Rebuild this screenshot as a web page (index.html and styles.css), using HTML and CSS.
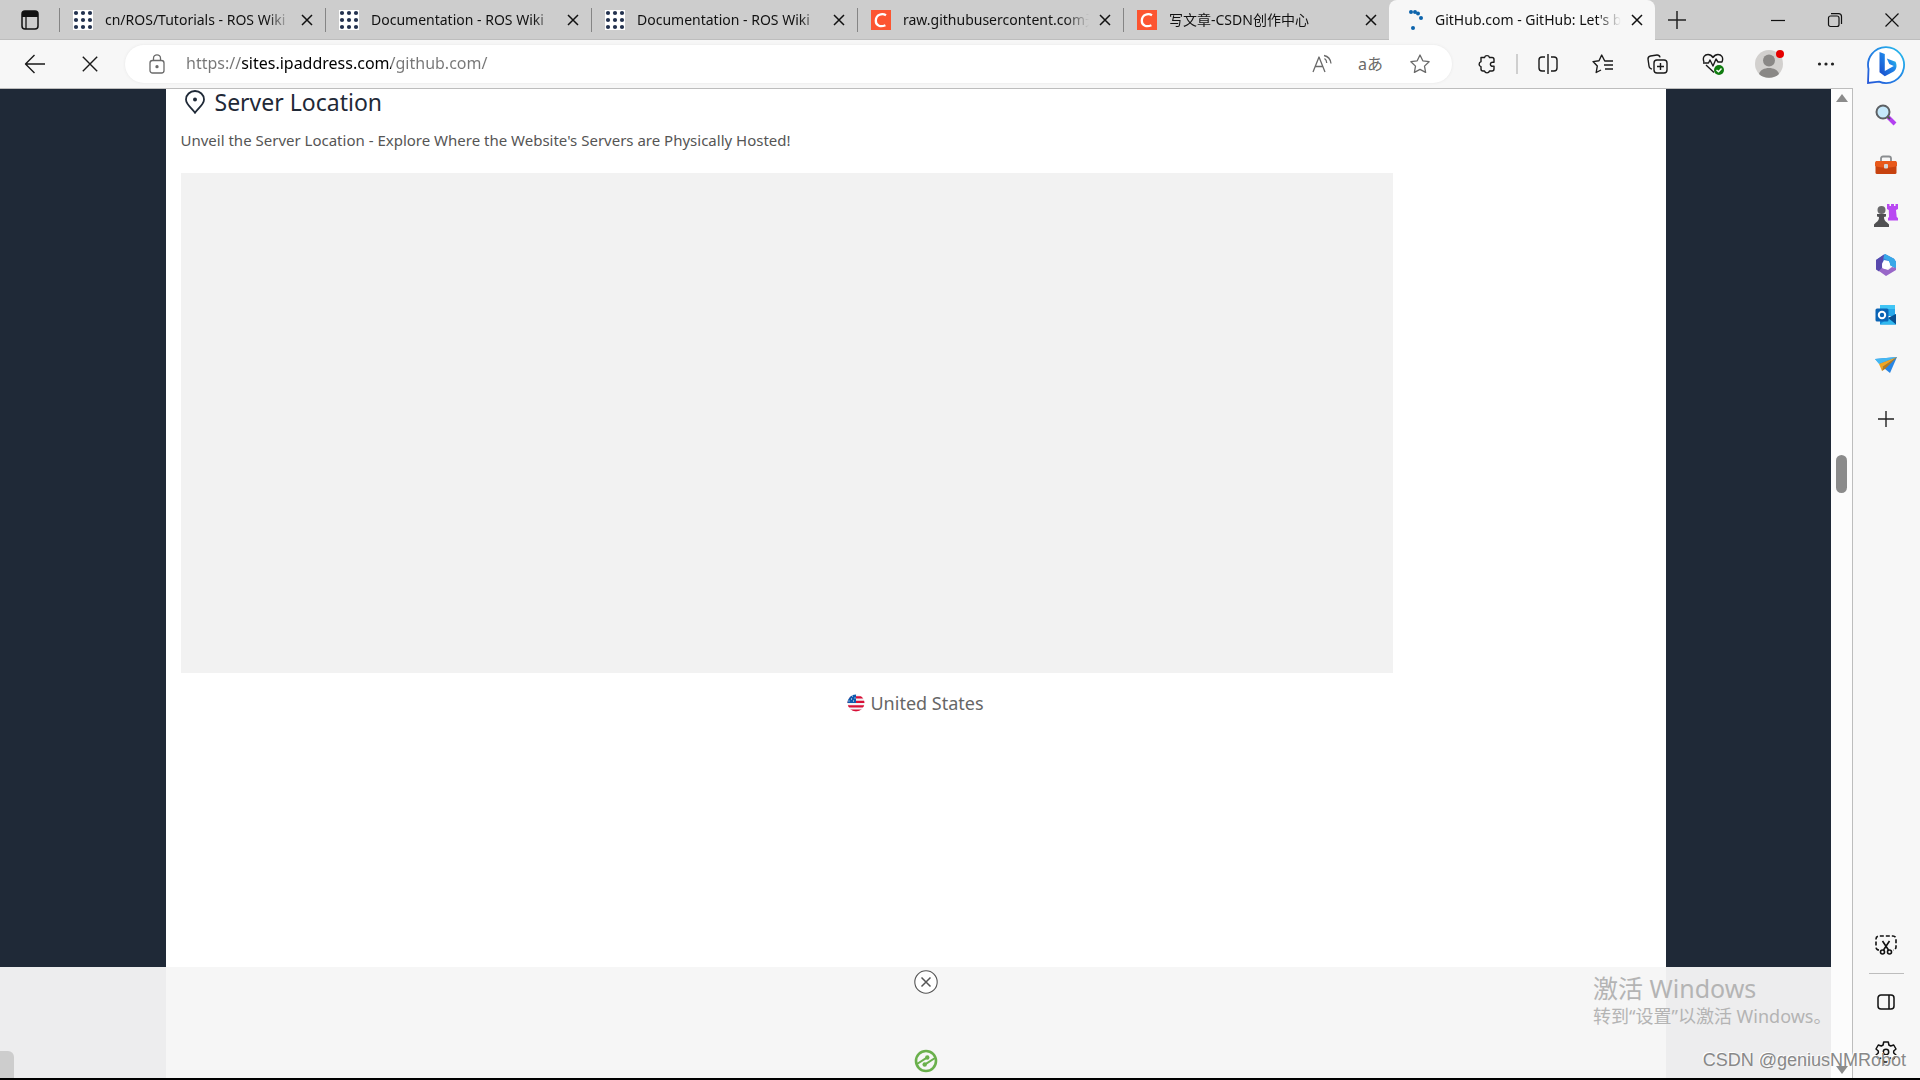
FILE: index.html
```html
<!DOCTYPE html>
<html lang="en">
<head>
<meta charset="utf-8">
<title>GitHub.com - GitHub: Let's build from here</title>
<link rel="stylesheet" href="styles.css">
</head>
<body>
<svg class="defs" aria-hidden="true">
  <symbol id="close" viewBox="0 0 12 12"><path d="M1 1l10 10M11 1L1 11"/></symbol>
  <symbol id="ros" viewBox="0 0 20 20">
    <rect width="20" height="20" fill="#fff"/>
    <g fill="#22314e"><circle cx="3" cy="3" r="2.1"/><circle cx="10" cy="3" r="2.1"/><circle cx="17" cy="3" r="2.1"/><circle cx="3" cy="10" r="2.1"/><circle cx="10" cy="10" r="2.1"/><circle cx="17" cy="10" r="2.1"/><circle cx="3" cy="17" r="2.1"/><circle cx="10" cy="17" r="2.1"/><circle cx="17" cy="17" r="2.1"/></g>
  </symbol>
  <symbol id="csdn" viewBox="0 0 20 20">
    <rect width="20" height="20" fill="#fc5531"/>
    <path d="M15 5.2C11 2.8 5 4.5 4.8 10.6c-.1 5.600 5.200 6.600 9.600 4.600" fill="none" stroke="#fff" stroke-width="2.300"/>
  </symbol>
</svg>

<header class="tabbar">
  <button class="tab-menu" aria-label="Tab actions menu">
    <svg width="18" height="20" viewBox="0 0 18 20"><rect x="1" y="1" width="16" height="18" rx="3" fill="none" stroke="#111" stroke-width="1.500"/><path d="M1 7V4a3 3 0 0 1 3-3h10a3 3 0 0 1 3 3v3z" fill="#111"/><path d="M5 7v12" stroke="#111" stroke-width="1.300"/></svg>
  </button>
  <nav class="tabs">
    <div class="tab"><svg class="favicon"><use href="#ros"/></svg><a class="tab-title" href="#">cn/ROS/Tutorials - ROS Wiki</a><button class="tab-close" aria-label="Close tab"><svg><use href="#close"/></svg></button></div>
    <div class="tab"><svg class="favicon"><use href="#ros"/></svg><a class="tab-title" href="#">Documentation - ROS Wiki</a><button class="tab-close" aria-label="Close tab"><svg><use href="#close"/></svg></button></div>
    <div class="tab"><svg class="favicon"><use href="#ros"/></svg><a class="tab-title" href="#">Documentation - ROS Wiki</a><button class="tab-close" aria-label="Close tab"><svg><use href="#close"/></svg></button></div>
    <div class="tab"><svg class="favicon"><use href="#csdn"/></svg><a class="tab-title" href="#">raw.githubusercontent.com无法</a><button class="tab-close" aria-label="Close tab"><svg><use href="#close"/></svg></button></div>
    <div class="tab"><svg class="favicon"><use href="#csdn"/></svg><a class="tab-title" href="#">写文章-CSDN创作中心</a><button class="tab-close" aria-label="Close tab"><svg><use href="#close"/></svg></button></div>
    <div class="tab tab-active"><svg class="favicon" viewBox="0 0 20 20"><g fill="#0c64ac"><circle cx="8" cy="2" r="2"/><circle cx="12" cy="2" r="2"/><circle cx="15" cy="3.500" r="2"/><circle cx="18" cy="8" r="2"/><circle cx="10" cy="18" r="2"/></g></svg><a class="tab-title" href="#">GitHub.com - GitHub: Let's build from here</a><button class="tab-close" aria-label="Close tab"><svg><use href="#close"/></svg></button></div>
  </nav>
  <button class="new-tab" aria-label="New tab"><svg width="18" height="18" viewBox="0 0 18 18"><path d="M9 0v18M0 9h18" stroke="#222" stroke-width="1.500"/></svg></button>
  <div class="window-buttons">
    <button aria-label="Minimize"><svg width="14" height="14" viewBox="0 0 14 14"><path d="M0 7.500h14"/></svg></button>
    <button aria-label="Restore"><svg width="14" height="14" viewBox="0 0 14 14"><rect x=".5" y="3" width="10.500" height="10.500" rx="2"/><path d="M3 .6h7.500a3 3 0 0 1 3 3V11"/></svg></button>
    <button aria-label="Close"><svg width="14" height="14" viewBox="0 0 14 14"><path d="M.5.5l13 13M13.500.5l-13 13"/></svg></button>
  </div>
</header>

<div class="window">
  <div class="browser">
    <div class="toolbar">
      <button class="nav-button" aria-label="Back"><svg width="22" height="20" viewBox="0 0 22 20"><path d="M21 10H1.500M10.500 1L1.500 10l9 9"/></svg></button>
      <button class="nav-button" aria-label="Stop"><svg width="16" height="16" viewBox="0 0 16 16"><path d="M.8.8l14.400 14.400M15.200.8L.8 15.200"/></svg></button>
      <form class="address">
        <svg class="lock" width="16" height="20" viewBox="0 0 16 20"><rect x="1" y="6.500" width="14" height="12.500" rx="2.500"/><path d="M4.500 6.500V4.300a3.500 3.500 0 0 1 7 0v2.200"/><circle cx="8" cy="12.700" r="1" fill="#666"/></svg>
        <input class="url" type="text" aria-label="Address" value="https://sites.ipaddress.com/github.com/">
        <button type="button" aria-label="Read aloud"><svg width="20" height="20" viewBox="0 0 20 20"><path d="M1 18L7 3l6 15M3.200 12.500h7.600M12.500 4.500a5 5 0 0 1 2.200 4.500M12 1.500c4 .8 6.500 3.500 7 8"/></svg></button>
        <button type="button" class="translate" aria-label="Translate">aあ</button>
        <button type="button" aria-label="Add to favorites"><svg width="20" height="20" viewBox="0 0 20 20"><path d="M10 1l2.800 5.800 6.300.9-4.600 4.400 1.100 6.300-5.600-3-5.600 3 1.100-6.300L.9 7.700l6.300-.9z"/></svg></button>
      </form>
      <button class="tool" aria-label="Extensions"><svg width="20" height="20" viewBox="0 0 20 20"><path d="M4 3.500h3.500a2.600 2.600 0 0 1 5 0H15a2 2 0 0 1 2 2v2.800h-1a2 2 0 1 0 0 3.800h1V15a2 2 0 0 1-2 2h-2.500a2.600 2.600 0 0 1-5 0H6a2 2 0 0 1-2-2v-2.300a2.600 2.600 0 0 1 0-5z"/></svg></button>
      <span class="divider"></span>
      <button class="tool" aria-label="Split screen"><svg width="20" height="20" viewBox="0 0 20 20"><path d="M7 17H4a3 3 0 0 1-3-3V6a3 3 0 0 1 3-3h3M10 0v20M13 3h3a3 3 0 0 1 3 3v8a3 3 0 0 1-3 3h-3"/></svg></button>
      <button class="tool" aria-label="Favorites"><svg width="22" height="20" viewBox="0 0 22 20"><path d="M13 7.500L9.700 1 7 6.800l-6 .8 4.300 4.400L4.200 18.500 9 16M13 7h8M12 11h9M13 15h8"/></svg></button>
      <button class="tool" aria-label="Collections"><svg width="22" height="20" viewBox="0 0 22 20"><path d="M5 15l-1.200-.4A3 3 0 0 1 2 12L1 5a3 3 0 0 1 2.500-3L10 1a3 3 0 0 1 3 2.300"/><rect x="7" y="6" width="13" height="13" rx="3"/><path d="M13.500 9v7M10 12.500h7"/></svg></button>
      <button class="tool" aria-label="Browser essentials"><svg width="22" height="22" viewBox="0 0 22 22"><path d="M2 9C0 4 3 1.500 6 1.500c2.300 0 4 1.500 5 3 1-1.500 2.700-3 5-3 3 0 6 2.500 4 7.500h-4l-2-3-3 7-3-6-1.500 3H1M4 12l8 7.500"/><circle cx="17" cy="17" r="5" fill="#107c10" stroke="none"/><path d="M14.500 17l2 1.800 3-3.300" stroke="#fff"/></svg></button>
      <button class="tool profile" aria-label="Profile"><span class="avatar"><svg width="28" height="28" viewBox="0 0 28 28"><circle cx="14" cy="14" r="14" fill="#d2d0ce"/><circle cx="14" cy="10.500" r="6" fill="#8a8886"/><path d="M4 24c2-8 18-8 20 0-5 5-15 5-20 0z" fill="#8a8886"/></svg></span></button>
      <button class="tool" aria-label="Settings and more"><svg width="18" height="4" viewBox="0 0 18 4"><g fill="#222" stroke="none"><circle cx="2.500" cy="2" r="1.600"/><circle cx="9" cy="2" r="1.600"/><circle cx="15.500" cy="2" r="1.600"/></g></svg></button>
    </div>

    <div class="viewport">
      <div class="page">
        <main class="content">
          <h2 class="heading"><svg width="20" height="24" viewBox="0 0 20 24"><path d="M10 22.800C7 18.500 1 14.500 1 9.500a9 8.500 0 0 1 18 0c0 5-6 9-9 13.300z" fill="none" stroke="#1f2937" stroke-width="1.800"/><circle cx="10" cy="9.500" r="2" fill="#1f2937"/></svg>Server Location</h2>
          <p class="lead">Unveil the Server Location - Explore Where the Website's Servers are Physically Hosted!</p>
          <div class="map"></div>
          <p class="country"><svg width="18" height="18" viewBox="0 0 18 18"><clipPath id="round"><circle cx="9" cy="9" r="8.500"/></clipPath><g clip-path="url(#round)"><rect width="18" height="18" fill="#f3f3f5"/><path d="M0 3.300h18M0 7.900h18M0 12.400h18M0 16.600h18" stroke="#d80f36" stroke-width="2.200"/><path d="M0 0h9v9H0z" fill="#0d5aae"/><path d="M2 3h1M5 2h1M7.500 4h1M4 5h1M1.500 7h1M6 7h1" stroke="#fff" stroke-width="1.200"/></g></svg>United States</p>
        </main>
        <aside class="banner">
          <button class="banner-close" aria-label="Close ad"><svg width="24" height="24" viewBox="0 0 24 24"><circle cx="12" cy="12" r="11.200" fill="#fff" stroke="#555" stroke-width="1.100"/><path d="M7.500 7.500l9 9M16.500 7.500l-9 9" stroke="#555" stroke-width="1.500"/></svg></button>
          <a class="banner-logo" href="#" aria-label="Ad provider"><svg width="24" height="24" viewBox="0 0 24 24"><g fill="none" stroke="#6ab04c"><circle cx="12" cy="12" r="10" stroke-width="2.600"/><path d="M3 15l9.500-6.200M21 9l-9.500 6.200" stroke-width="2"/></g><g fill="#6ab04c"><circle cx="13.300" cy="8.500" r="2.200"/><circle cx="10.700" cy="15.500" r="2.200"/></g></svg></a>
        </aside>
        <span class="status-stub"></span>
        <div class="activation"><strong>激活 Windows</strong><span>转到“设置”以激活 Windows。</span></div>
      </div>
      <div class="scrollbar">
        <span class="arrow-up"></span>
        <span class="thumb"></span>
        <span class="arrow-down"></span>
      </div>
    </div>
  </div>

  <nav class="sidebar">
    <button class="bing" aria-label="Bing chat"><svg width="40" height="40" viewBox="0 0 40 40"><defs><linearGradient id="ring" x1="0" y1="1" x2="1" y2="0"><stop offset="0" stop-color="#2456d8"/><stop offset=".55" stop-color="#238ae6"/><stop offset="1" stop-color="#29c2ec"/></linearGradient><linearGradient id="bee" x1="0" y1="1" x2="1" y2="0"><stop offset="0" stop-color="#1947c9"/><stop offset=".6" stop-color="#2088ea"/><stop offset="1" stop-color="#35e0dc"/></linearGradient></defs><path d="M2 38l.5-14A18 18 0 1 1 13 36.600L2 38z" fill="#fff" stroke="url(#ring)" stroke-width="1.800"/><path d="M13.500 7l5.300 2v17l9-5-4.500-2-2.500-5.500 8.700 3.300c2 4 1 8-2.200 10l-8.500 4.500-5.300-4z" fill="url(#bee)"/></svg></button>
    <button aria-label="Search"><svg width="22" height="22" viewBox="0 0 22 22"><path d="M13 13l7 7" stroke="#b340f0" stroke-width="4"/><path d="M12 12l3 3" stroke="#555" stroke-width="2"/><circle cx="8" cy="8" r="6.500" fill="#c5e8fb" stroke="#5d6064" stroke-width="2"/></svg></button>
    <button aria-label="Shopping"><svg width="24" height="20" viewBox="0 0 24 20"><path d="M7 6V3.500C7 2 8 1.500 9 1.500h6c1 0 2 .5 2 2V6" fill="none" stroke="#8a8d90" stroke-width="1.800"/><rect x="1.500" y="6" width="21" height="13" rx="1.500" fill="#c7420f"/><path d="M2 6h20l1 2v3c-6 2-16 2-22 0V8z" fill="#e8591b"/><rect x="10" y="9" width="4" height="4.500" rx="1" fill="#d4d6d8"/></svg></button>
    <button aria-label="Games"><svg width="24" height="24" viewBox="0 0 24 24"><path d="M13 1h2.500v2H17V1h3v2h1.500V1H24v5l-2 1 .7 7 1.300 1v2.500H14V15l1-1-.2-7L13 6z" fill="#b948f2"/><circle cx="7.500" cy="7" r="4" fill="#6a6a6c"/><path d="M3 11h9v2.500l-2 .5c0 3 1 4 3 5.500l2 2V24H0v-2.500l2-2c2-1.500 3-2.500 3-5.500l-2-.5z" fill="#505052"/></svg></button>
    <button aria-label="Microsoft 365"><svg width="22" height="24" viewBox="0 0 22 24"><path d="M10 1l9 4.800 2 3v7L15 12l-1-4-5-1-5 10-3-2V7z" fill="#3b7fdd"/><path d="M10 1l9 4.800 2 3v7L15 12l-1-4L8 5z" fill="#38a8e8"/><path d="M1 7l8-5.500-1 6-1 8-3 3-3-2z" fill="#5949ad"/><path d="M4 18l3-3 6 2 4-3 4 1v2l-10 6z" fill="#9967c8"/><circle cx="11" cy="12" r="4" fill="#fff"/></svg></button>
    <button aria-label="Outlook"><svg width="22" height="22" viewBox="0 0 22 22"><rect x="5" y="1" width="15" height="11" fill="#28a8ea"/><path d="M5 1h15v4H5z" fill="#41c5f5"/><path d="M5 10l8 4 8-4v10.500H5z" fill="#1490df"/><path d="M21 10v10.500L13 14z" fill="#0a4f90"/><path d="M5 20.500l8-6.500 8 6.500z" fill="#32b9ef"/><rect x=".5" y="4.500" width="13" height="13" rx="1.500" fill="#0b64b5"/><circle cx="7" cy="11" r="3.200" fill="none" stroke="#fff" stroke-width="2"/></svg></button>
    <button aria-label="Drop"><svg width="24" height="18" viewBox="0 0 24 18"><path d="M1 3l22-2-7 16-5-4z" fill="#2785e4"/><path d="M1 3l22-2L5 8z" fill="#45b8f2"/><path d="M5 8L23 1 8.500 11 8 15z" fill="#f2a521"/><path d="M8 15l.5-4L23 1 11 13z" fill="#b97918"/></svg></button>
    <button class="add" aria-label="Customize"><svg width="16" height="16" viewBox="0 0 16 16"><path d="M8 0v16M0 8h16" stroke="#222" stroke-width="1.400"/></svg></button>
    <button class="capture" aria-label="Screenshot"><svg width="22" height="20" viewBox="0 0 22 20"><g fill="none" stroke="#111" stroke-width="1.600"><path d="M4 15a3 3 0 0 1-3-3V4a3 3 0 0 1 3-3h14a3 3 0 0 1 3 3v8a3 3 0 0 1-3 3" stroke-dasharray="4 2"/><path d="M7.500 6l6 9M14.500 6l-6 9"/><circle cx="7.500" cy="17" r="2"/><circle cx="14.500" cy="17" r="2"/></g></svg></button>
    <hr>
    <button aria-label="Hide sidebar"><svg width="18" height="16" viewBox="0 0 18 16"><path d="M4 1h10a3 3 0 0 1 3 3v8a3 3 0 0 1-3 3H4a3 3 0 0 1-3-3V4a3 3 0 0 1 3-3zM12 1v14" fill="none" stroke="#111" stroke-width="1.500"/></svg></button>
    <button aria-label="Settings"><svg width="22" height="22" viewBox="0 0 22 22"><g fill="none" stroke="#111" stroke-width="1.500" stroke-linejoin="round"><path d="M8.700 1h4.600l.6 3 1.800 1 3-1 2.300 4-2.300 2v2l2.300 2-2.300 4-3-1-1.800 1-.6 3H8.700l-.6-3-1.800-1-3 1L1 14l2.300-2v-2L1 8l2.300-4 3 1 1.800-1z"/><circle cx="11" cy="11" r="2.700"/></g></svg></button>
  </nav>
</div>
<div class="credit">CSDN @geniusNMRobot</div>
</body>
</html>
```
FILE: styles.css
```css
* { box-sizing: border-box; }

body {
  margin: 0;
  height: 100vh;
  display: flex;
  flex-direction: column;
  position: relative;
  overflow: hidden;
  border-bottom: 2px solid #000;
  background: #f7f7f7;
  color: #111;
  font-family: "Noto Sans", "Noto Sans CJK SC", sans-serif;
  font-size: 14px;
}

button {
  display: flex;
  align-items: center;
  justify-content: center;
  flex: none;
  margin: 0;
  padding: 0;
  border: 0;
  background: none;
  font: inherit;
  color: inherit;
}

a { color: inherit; text-decoration: none; }
svg { display: block; flex: none; }
.defs { position: absolute; width: 0; height: 0; }

/* Tab strip */
.tabbar {
  display: flex;
  flex: none;
  height: 40px;
  background: #cdcdcd;
  box-shadow: inset 0 -1px #bdbdbd;
}
.tab-menu { width: 59px; }
.tabs { display: flex; flex: 0 1 1596px; min-width: 0; }
.tab {
  display: flex;
  align-items: center;
  flex: 1 1 0;
  min-width: 0;
  height: 40px;
  padding: 0 6px 0 14px;
  background: linear-gradient(#858585, #858585) 0 50% / 1px 24px no-repeat;
}
.tab-active {
  background: #f7f7f7;
  border-radius: 8px 8px 0 0;
}
.favicon { width: 20px; height: 20px; }
.tab-title {
  flex: 1;
  min-width: 0;
  margin-left: 12px;
  overflow: hidden;
  white-space: nowrap;
  line-height: 24px;
  mask-image: linear-gradient(90deg, #000 calc(100% - 24px), transparent);
}
.tab-close { width: 24px; height: 24px; margin-left: 4px; }
.tab-close svg { width: 12px; height: 12px; stroke: #111; stroke-width: 1.5; }
.new-tab { width: 44px; }
.window-buttons { display: flex; margin-left: auto; }
.window-buttons button { width: 57px; }
.window-buttons svg { fill: none; stroke: #111; stroke-width: 1.2; overflow: visible; }

/* Window body */
.window { display: flex; flex: 1; min-height: 0; }
.browser { display: flex; flex-direction: column; flex: 1; min-width: 0; }

.toolbar {
  display: flex;
  align-items: center;
  flex: none;
  height: 49px;
  padding-left: 7px;
  border-bottom: 1px solid #bdbdbd;
}
.toolbar button { height: 40px; }
.toolbar svg { fill: none; stroke: #1a1a1a; stroke-width: 1.4; stroke-linejoin: round; }
.nav-button { width: 55px; }
.address {
  display: flex;
  align-items: center;
  flex: 1;
  min-width: 0;
  height: 38px;
  margin: 0 7px 0 8px;
  padding: 0 8px 0 24px;
  border-radius: 20px;
  background: #fff;
  box-shadow: 0 0 3px #e6e6e6;
}
.toolbar .address svg { stroke: #6a6a6a; stroke-width: 1.3; }
.address button { width: 49px; }
.translate { color: #6a6a6a; font-size: 16px; line-height: 20px; }
.url {
  flex: 1;
  min-width: 0;
  height: 32px;
  margin-left: 21px;
  padding: 0 0 2px;
  border: 0;
  outline: 0;
  font: inherit;
  font-size: 16px;
  color: transparent;
  background: linear-gradient(90deg, #767676 56px, #000 56px 205px, #767676 205px);
  -webkit-background-clip: text;
  background-clip: text;
}
.tool { width: 55px; }
.profile { width: 58px; }
.divider { width: 2px; height: 20px; margin: 0 2px; background: #cfcfcf; }
.avatar { position: relative; }
.avatar::after {
  content: "";
  position: absolute;
  top: 0;
  right: -1px;
  width: 8px;
  height: 8px;
  border-radius: 50%;
  background: #e60000;
}
.toolbar .avatar svg { stroke: none; }

/* Page */
.viewport { display: flex; flex: 1; min-height: 0; }
.page {
  position: relative;
  flex: 1;
  min-width: 0;
  overflow: hidden;
  background: #1f2937;
}
.content {
  max-width: 1500px;
  height: 100%;
  margin: 0 auto;
  padding: 0 15px;
  background: #fff;
}
.heading {
  display: flex;
  align-items: center;
  gap: 10px;
  margin: 0;
  padding-left: 4px;
  font-size: 23px;
  line-height: 26px;
  font-weight: 400;
  color: #1f2937;
}
.lead { margin: 13px 0 21px; font-size: 15px; line-height: 24px; color: #555; }
.map { max-width: 1212px; height: 500px; background: #f2f2f2; }
.country {
  display: flex;
  align-items: center;
  justify-content: center;
  gap: 5px;
  margin: 16px 0 0;
  font-size: 18px;
  line-height: 28px;
  color: #666;
}
.banner {
  position: absolute;
  inset: auto 0 0;
  display: flex;
  flex-direction: column;
  justify-content: space-between;
  align-items: center;
  height: 111px;
  padding: 3px 0 5px 20px;
  background: rgba(246, 246, 246, 0.96);
}
.status-stub {
  position: absolute;
  left: 0;
  bottom: 0;
  width: 14px;
  height: 27px;
  border-radius: 0 6px 0 0;
  background: #cdcdcd;
}
.activation {
  position: absolute;
  right: 0;
  bottom: 50px;
  display: flex;
  flex-direction: column;
  width: 238px;
  color: #b4b4b4;
  font-size: 18px;
  line-height: 24px;
  white-space: nowrap;
}
.activation strong { font-size: 25px; line-height: 32px; font-weight: 400; }

.scrollbar {
  display: flex;
  flex-direction: column;
  align-items: center;
  flex: none;
  width: 22px;
  padding: 5px 0 4px;
  background: #fcfcfc;
  border-right: 1px solid #bdbdbd;
}
.arrow-up, .arrow-down { border: 6px solid transparent; border-top-width: 0; border-bottom: 8px solid #8b8b8b; }
.arrow-down { border-top: 8px solid #8b8b8b; border-bottom-width: 0; margin-top: auto; }
.thumb { width: 11px; height: 38px; margin-top: 353px; border-radius: 6px; background: #8b8b8b; }

/* Sidebar */
.sidebar {
  display: flex;
  flex-direction: column;
  flex: none;
  width: 67px;
  padding: 0 1px 1px 0;
}
.sidebar button { height: 50px; }
.sidebar .add { margin-top: 4px; }
.sidebar .capture { margin-top: auto; }
.sidebar hr { width: 35px; height: 1px; margin: 3px auto; border: 0; background: #bdbdbd; }

.credit {
  position: absolute;
  right: 14px;
  bottom: 6px;
  font-family: "Liberation Sans", sans-serif;
  font-size: 18px;
  line-height: 24px;
  color: #888;
  text-shadow: -1px -1px #fff;
}
```
